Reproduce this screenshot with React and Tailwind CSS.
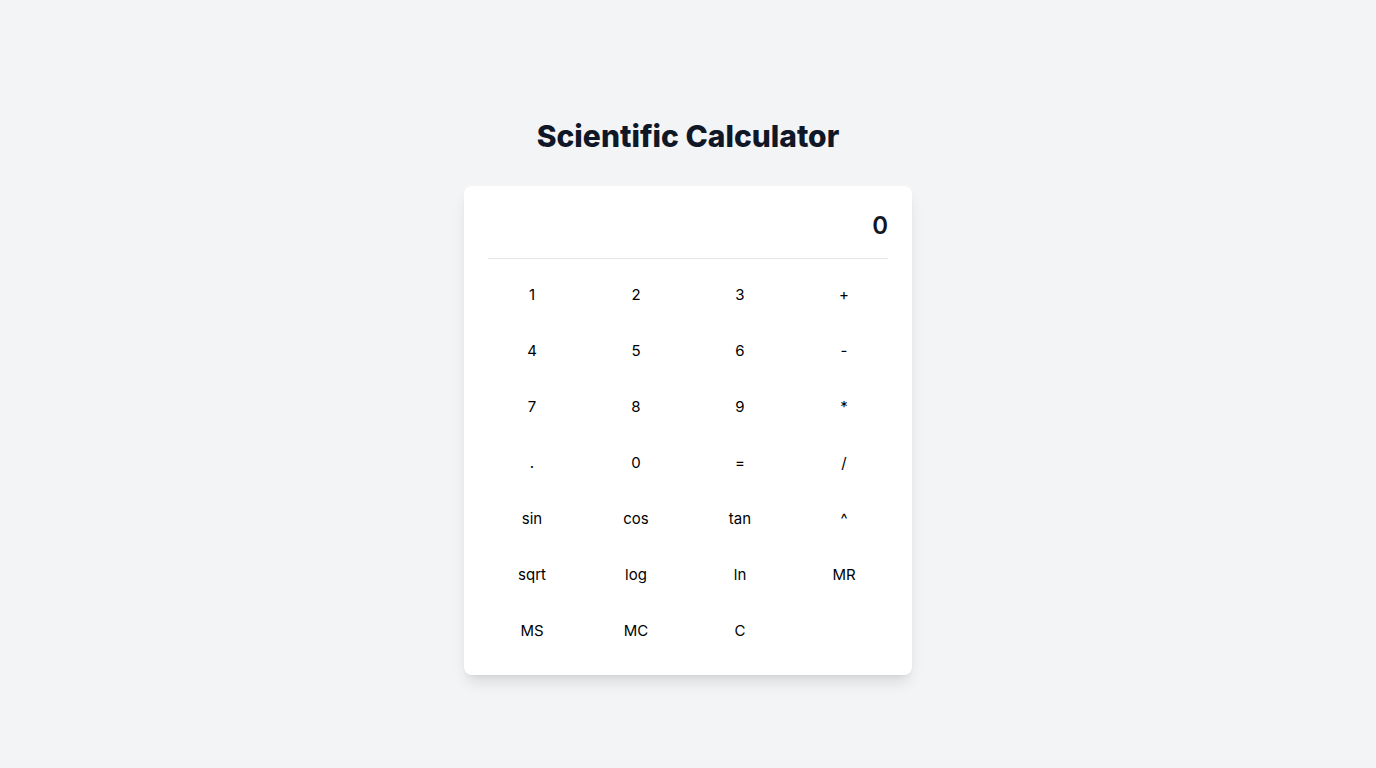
import { useState } from "react";

const keys = [
  "1", "2", "3", "+",
  "4", "5", "6", "-",
  "7", "8", "9", "*",
  ".", "0", "=", "/",
  "sin", "cos", "tan", "^",
  "sqrt", "log", "ln", "MR",
  "MS", "MC", "C",
];

export default function App() {
  const [display, setDisplay] = useState("0");

  return (
    <div
      className="min-h-screen bg-gray-100 flex flex-col items-center pt-[118px]"
      style={{ fontFamily: "Inter, 'Liberation Sans', sans-serif" }}
    >
      <h1 className="text-3xl font-extrabold text-gray-900 mb-8">Scientific Calculator</h1>

      <div className="bg-white rounded-lg shadow-lg p-6 w-full max-w-md">
        {/* Display */}
        <div className="text-right text-2xl font-semibold text-gray-900 pb-4 mb-4 border-b border-gray-200">
          {display}
        </div>

        {/* Keys */}
        <div className="grid grid-cols-4 gap-4">
          {keys.map((k) => (
            <button
              key={k}
              onClick={() => setDisplay(k === "C" ? "0" : k)}
              className="h-10 text-[15px] text-black rounded hover:bg-gray-100"
            >
              {k}
            </button>
          ))}
        </div>
      </div>
    </div>
  );
}
